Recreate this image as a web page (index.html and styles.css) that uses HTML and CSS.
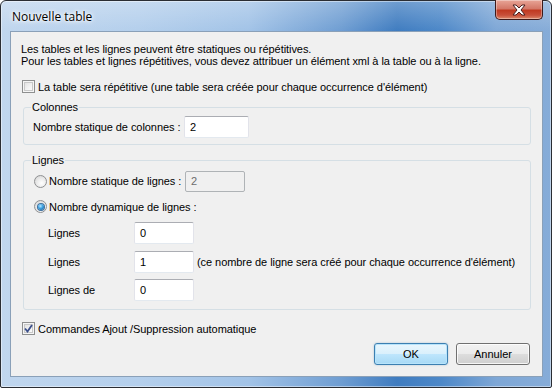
FILE: index.html
```html
<!DOCTYPE html>
<html lang="fr">
<head>
    <meta charset="UTF-8">
    <title>Nouvelle table</title>
    <link rel="stylesheet" href="styles.css">
</head>
<body>
    <div class="window">
        <div class="titlebar">
            <span class="title">Nouvelle table</span>
            <button class="close-button" aria-label="Fermer">
                <svg width="16" height="12" viewBox="0 0 16 12">
                    <path d="M2 1 L5 1 L8 4 L11 1 L14 1 L10 6 L14 11 L11 11 L8 8 L5 11 L2 11 L6 6 Z" fill="#fff" stroke="#4a2020" stroke-width="1" stroke-linejoin="round"/>
                </svg>
            </button>
        </div>

        <div class="client">
            <p class="intro">
                Les tables et les lignes peuvent être statiques ou répétitives.<br>
                Pour les tables et lignes répétitives, vous devez attribuer un élément xml à la table ou à la ligne.
            </p>

            <label class="check-row repeat-row">
                <span class="checkbox"></span>
                La table sera répétitive (une table sera créée pour chaque occurrence d'élément)
            </label>

            <fieldset class="group group-cols">
                <legend>Colonnes</legend>
                <div class="field-row cols-row">
                    <span class="cols-label">Nombre statique de colonnes :</span>
                    <span class="textbox textbox-cols">2</span>
                </div>
            </fieldset>

            <fieldset class="group group-rows">
                <legend>Lignes</legend>
                <div class="field-row radio-row static-row">
                    <span class="radio"></span>
                    <span class="radio-label">Nombre statique de lignes :</span>
                    <span class="textbox textbox-disabled">2</span>
                </div>
                <div class="field-row radio-row dynamic-row">
                    <span class="radio radio-on"></span>
                    <span>Nombre dynamique de lignes :</span>
                </div>
                <div class="dynamic-fields">
                    <div class="field-row">
                        <span class="dyn-label">Lignes</span>
                        <span class="textbox textbox-small">0</span>
                    </div>
                    <div class="field-row">
                        <span class="dyn-label">Lignes</span>
                        <span class="textbox textbox-small">1</span>
                        <span class="hint">(ce nombre de ligne sera créé pour chaque occurrence d'élément)</span>
                    </div>
                    <div class="field-row">
                        <span class="dyn-label">Lignes de</span>
                        <span class="textbox textbox-small">0</span>
                    </div>
                </div>
            </fieldset>

            <label class="check-row auto-row">
                <span class="checkbox checkbox-on">
                    <svg width="9" height="9" viewBox="0 0 9 9">
                        <path d="M1 4.5 L3.5 7.5 L8 1" fill="none" stroke="#3b4f8a" stroke-width="1.8"/>
                    </svg>
                </span>
                Commandes Ajout /Suppression automatique
            </label>

            <div class="buttons">
                <button class="btn btn-default">OK</button>
                <button class="btn">Annuler</button>
            </div>
        </div>
    </div>
</body>
</html>
```

FILE: styles.css
```css
body {
    margin: 0;
    padding: 0;
    background: #ffffff;
    font-family: "Liberation Sans", Arial, sans-serif;
    font-size: 11px;
    letter-spacing: -0.06px;
    color: #000;
}

.window {
    width: 552px;
    height: 388px;
    box-sizing: border-box;
    border: 1px solid #2a2d33;
    border-radius: 6px 6px 2px 2px;
    display: flex;
    flex-direction: column;
    background:
        linear-gradient(180deg, rgba(255, 255, 255, 0.25) 0%, rgba(255, 255, 255, 0) 30px),
        linear-gradient(90deg, #c0d6ee 0%, #b4cfec 25%, #a2c3e7 45%, #6e9dd2 62%, #3f7cc0 72%, #4d88c8 80%, #7ea7d6 90%, #86acd8 100%);
    box-shadow: inset 0 0 0 1px rgba(255, 255, 255, 0.45);
}

.titlebar {
    height: 30px;
    flex-shrink: 0;
    display: flex;
    justify-content: space-between;
    align-items: flex-start;
}

.title {
    font-family: "Open Sans", "Noto Sans", sans-serif;
    font-size: 12px;
    letter-spacing: 0;
    margin: 8px 0 0 11px;
    line-height: 16px;
    text-shadow: 0 0 6px #fff, 0 0 4px #fff, 0 0 2px #fff;
}

.close-button {
    width: 48px;
    height: 20px;
    margin: -1px 8px 0 0;
    padding: 0;
    border: 1px solid #3d1a1a;
    border-top: none;
    border-radius: 0 0 5px 5px;
    background: linear-gradient(180deg, #e8a597 0%, #d47868 45%, #c03a22 55%, #c8503a 80%, #dc8a6c 100%);
    box-shadow: inset 0 0 0 1px rgba(255, 255, 255, 0.35);
    display: flex;
    align-items: center;
    justify-content: center;
}

.client {
    flex: 1;
    margin: 0 8px 10px 9px;
    border: 1px solid #8aa0b8;
    background: #f0f0f0;
    display: flex;
    flex-direction: column;
}

.intro {
    margin: 11px 0 0 10px;
    line-height: 12px;
}

.check-row {
    display: flex;
    align-items: center;
    height: 13px;
    margin-left: 11px;
}

.repeat-row {
    margin-top: 13px;
}

.checkbox {
    width: 11px;
    height: 11px;
    border: 1px solid #8e8f8f;
    margin-right: 3px;
    background: linear-gradient(135deg, #dcdcdc 0%, #f4f4f4 60%, #ffffff 100%);
    box-shadow: inset 0 0 0 1px #f5f5f5, inset 0 0 0 2px #c8c8c8;
    display: flex;
    align-items: center;
    justify-content: center;
}

.group {
    margin: 0 11px 0 12px;
    padding: 0 7px;
    border: 1px solid #d5dfe5;
    border-radius: 3px;
    min-width: 0;
}

.group legend {
    padding: 0 1px;
    line-height: 13px;
}

.group-cols {
    margin-top: 8px;
    padding-bottom: 6px;
}

.group-rows {
    margin-top: 9px;
    padding-bottom: 8px;
}

.field-row {
    display: flex;
    align-items: center;
    height: 22px;
}

.cols-row {
    margin-top: 2px;
    padding-left: 2px;
}

.cols-label {
    width: 151px;
}

.textbox {
    box-sizing: border-box;
    height: 22px;
    line-height: 20px;
    padding-left: 5px;
    background: #ffffff;
    border: 1px solid #e2e3ea;
    border-top-color: #abadb3;
    border-bottom-color: #e3e9ef;
    border-radius: 2px;
}

.textbox-cols {
    width: 65px;
}

.textbox-disabled {
    width: 60px;
    height: 21px;
    line-height: 19px;
    background: #f0f0f0;
    border-color: #afb3b6;
    color: #6d6d6d;
}

.textbox-small {
    width: 60px;
}

.static-row {
    margin-top: 3px;
    padding-left: 3px;
}

.dynamic-row {
    margin-top: 8px;
    height: 13px;
    padding-left: 3px;
}

.radio {
    width: 11px;
    height: 11px;
    border: 1px solid #8f9092;
    border-radius: 50%;
    margin-right: 2px;
    background: radial-gradient(circle at 60% 65%, #ffffff 0%, #ececec 45%, #cfcfcf 100%);
    display: flex;
    align-items: center;
    justify-content: center;
}

.radio-on::after {
    content: "";
    width: 6px;
    height: 6px;
    border-radius: 50%;
    background: radial-gradient(circle at 40% 35%, #b8e6ff 0%, #3aa0e0 45%, #0f4f8c 100%);
    box-shadow: 0 0 0 1px #3d6f9e;
}

.radio-label {
    width: 136px;
}

.dynamic-fields {
    margin-top: 9px;
    display: flex;
    flex-direction: column;
    gap: 6.5px;
    padding-left: 17px;
}

.dyn-label {
    width: 86px;
}

.hint {
    margin-left: 3px;
}

.auto-row {
    margin-top: 12px;
}

.buttons {
    margin: 8px 12px 0 0;
    display: flex;
    justify-content: flex-end;
    gap: 8px;
}

.btn {
    width: 74px;
    height: 22px;
    padding: 0;
    font-family: "Liberation Sans", Arial, sans-serif;
    font-size: 11px;
    color: #000;
    border: 1px solid #707070;
    border-radius: 3px;
    background: linear-gradient(180deg, #f2f2f2 0%, #ebebeb 50%, #dddddd 51%, #cfcfcf 100%);
    box-shadow: inset 0 0 0 1px rgba(255, 255, 255, 0.8);
}

.btn-default {
    border-color: #3c7fb1;
    background: linear-gradient(180deg, #eaf6fd 0%, #d9f0fc 50%, #bee6fd 51%, #a7d9f5 100%);
    box-shadow: inset 0 0 0 1px #b8e4fb, 0 0 2px rgba(60, 127, 177, 0.4);
}
```
